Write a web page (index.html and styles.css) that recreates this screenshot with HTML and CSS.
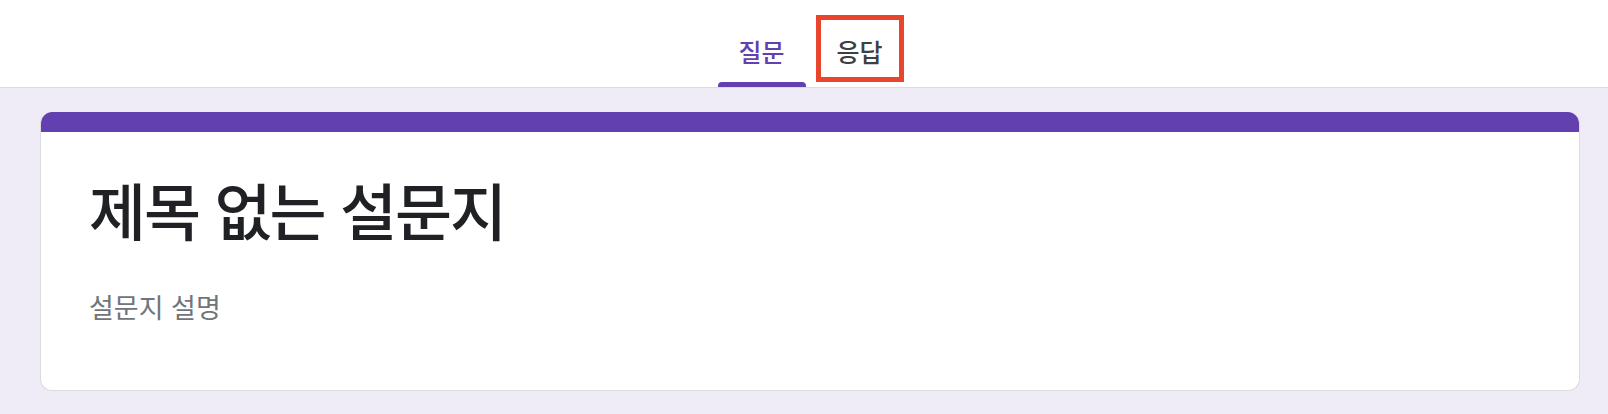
FILE: index.html
```html
<!DOCTYPE html>
<html lang="ko">
<head>
<meta charset="utf-8">
<link rel="stylesheet" href="styles.css">
</head>
<body>
<header class="topbar">
  <nav class="tabs">
    <div class="tab tab-active">질문<span class="tab-indicator"></span></div>
    <div class="tab tab-highlight">응답</div>
  </nav>
</header>
<main class="content">
  <section class="card">
    <div class="card-accent"></div>
    <div class="card-body">
      <h1 class="form-title">제목 없는 설문지</h1>
      <p class="form-desc">설문지 설명</p>
    </div>
  </section>
</main>
</body>
</html>
```
FILE: styles.css
```css
* { box-sizing: border-box; }
html, body { margin: 0; padding: 0; }
body {
  width: 1608px;
  height: 414px;
  overflow: hidden;
  background: #efebf7;
  font-family: "Noto Sans CJK KR", "Noto Sans", sans-serif;
}
.topbar {
  height: 88px;
  background: #ffffff;
  border-bottom: 1px solid #dadce0;
  display: flex;
  justify-content: center;
  padding-left: 13px;
}
.tabs {
  display: flex;
  gap: 10px;
  align-items: stretch;
}
.tab {
  position: relative;
  width: 88px;
  display: flex;
  align-items: center;
  justify-content: center;
  font-size: 25px;
  font-weight: 500;
  color: #3c4043;
  letter-spacing: 0;
}
.tab-active {
  color: #6340b0;
  padding-top: 14px;
}
.tab-indicator {
  position: absolute;
  left: 0;
  right: 0;
  bottom: 0;
  height: 5px;
  background: #6340b0;
  border-radius: 4px 4px 0 0;
}
.tab-highlight {
  margin: 15px 0 5px;
  border: 5px solid #e9452d;
  padding-top: 4px;
}
.content {
  padding: 24px 28px 0 40px;
}
.card {
  height: 279px;
  background: #ffffff;
  border: 1px solid #dadce0;
  border-top: none;
  border-radius: 12px;
  overflow: hidden;
}
.card-accent {
  height: 20px;
  background: #6340b0;
}
.card-body {
  padding: 36px 0 0 48px;
}
.form-title {
  margin: 0;
  font-size: 62px;
  font-weight: 500;
  line-height: 82px;
  color: #202124;
  letter-spacing: -2px;
}
.form-desc {
  margin: 39px 0 0;
  font-size: 27px;
  line-height: 36px;
  color: #70757a;
  letter-spacing: 0;
}
```
